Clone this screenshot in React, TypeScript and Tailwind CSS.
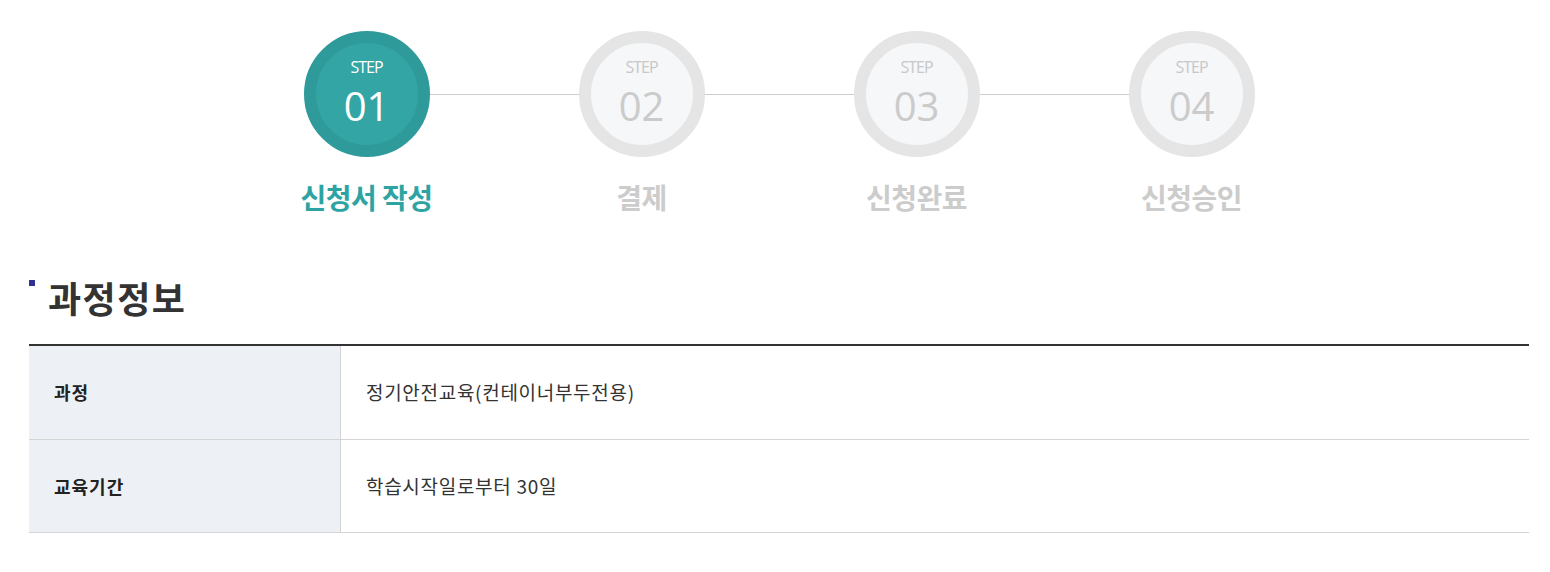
import React from "react";

const steps = [
  { no: "01", label: "신청서 작성", active: true },
  { no: "02", label: "결제", active: false },
  { no: "03", label: "신청완료", active: false },
  { no: "04", label: "신청승인", active: false },
];

function Circle({ no, active }: { no: string; active: boolean }) {
  return (
    <div
      className={
        "w-[126px] h-[126px] rounded-full border-[12px] flex flex-col items-center shrink-0 pt-[16px] " +
        (active ? "border-[#2e9a9a] bg-[#33a5a5]" : "border-[#e5e5e5] bg-[#f6f7f9]")
      }
    >
      <span
        className={
          "text-[16px] leading-[16px] font-['Open_Sans',sans-serif] tracking-[-1px] " +
          (active ? "text-white" : "text-[#c8c8c8]")
        }
      >
        STEP
      </span>
      <span
        className={
          "text-[40px] leading-[40px] font-medium font-['Open_Sans',sans-serif] mt-[11px] " +
          (active ? "text-white" : "text-[#cbcbcb]")
        }
      >
        {no}
      </span>
    </div>
  );
}

export default function App() {
  return (
    <div className="w-[1550px] h-[572px] bg-white font-['Noto_Sans_CJK_KR','Noto_Sans',sans-serif]">
      <div className="ml-[29px] w-[1500px] pt-[31px]">
        <div className="flex items-center justify-center">
          {steps.map((s, i) => (
            <React.Fragment key={s.no}>
              {i > 0 && <div className="w-[149px] h-px bg-[#cccccc]" />}
              <Circle no={s.no} active={s.active} />
            </React.Fragment>
          ))}
        </div>
        <div className="grid grid-cols-4 w-[1100px] mx-auto mt-[20px]">
          {steps.map((s) => (
            <div
              key={s.no}
              className={
                "text-center text-[28px] leading-[40px] font-bold tracking-[-0.5px] " +
                (s.active ? "text-[#2ea3a3]" : "text-[#cccccc]")
              }
            >
              {s.label}
            </div>
          ))}
        </div>

        <div className="mt-[58px] flex items-start">
          <span className="w-[6px] h-[6px] bg-[#2e3192] mt-[5px] shrink-0" />
          <h2 className="ml-[13px] text-[36px] leading-[44px] font-bold text-[#333333] tracking-[1.5px]">
            과정정보
          </h2>
        </div>

        <div className="mt-[25px] border-t-2 border-[#333333]">
          <div className="flex border-b border-[#d4d4d4]">
            <div className="w-[312px] h-[93px] bg-[#edf1f5] border-r border-[#d4d4d4] flex items-center pl-[25px] text-[18px] font-bold text-[#222222] tracking-[1px]">
              과정
            </div>
            <div className="flex-1 flex items-center pl-[25px] text-[19px] text-[#333333] tracking-[0.7px]">
              정기안전교육(컨테이너부두전용)
            </div>
          </div>
          <div className="flex border-b border-[#d4d4d4]">
            <div className="w-[312px] h-[92px] bg-[#edf1f5] border-r border-[#d4d4d4] flex items-center pl-[25px] text-[18px] font-bold text-[#222222] tracking-[1px]">
              교육기간
            </div>
            <div className="flex-1 flex items-center pl-[25px] text-[19px] text-[#333333] tracking-[0.7px]">
              학습시작일로부터 30일
            </div>
          </div>
        </div>
      </div>
    </div>
  );
}
